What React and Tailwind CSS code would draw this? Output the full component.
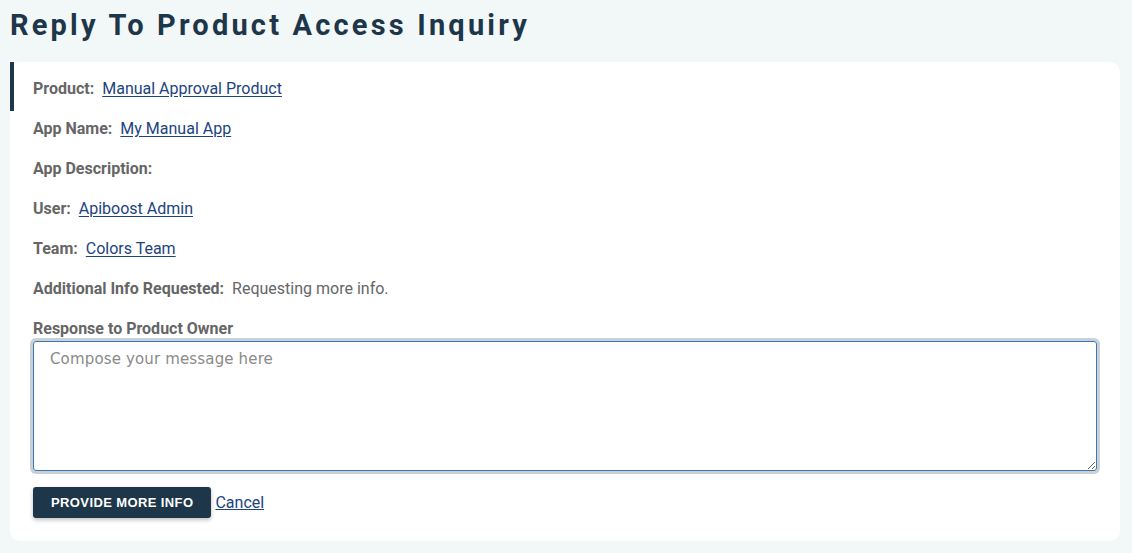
import React from "react";

const rows = [
  { label: "Product:", value: "Manual Approval Product", link: true },
  { label: "App Name:", value: "My Manual App", link: true },
  { label: "App Description:", value: "" },
  { label: "User:", value: "Apiboost Admin", link: true },
  { label: "Team:", value: "Colors Team", link: true },
  { label: "Additional Info Requested:", value: "Requesting more info." },
];

const App = () => {
  return (
    <div className="min-h-screen bg-[#f2f7f7] pl-[10px] pr-[12px] pt-[5px] pb-3 font-['Roboto',sans-serif]">
      <h1 className="text-[29px] font-bold tracking-[0.11em] text-[#1d3649] leading-[40px]">
        Reply To Product Access Inquiry
      </h1>

      {/* Card */}
      <div className="relative mt-[17px] bg-white rounded-[10px] pl-[23px] pr-[23px] pt-[7px] pb-[23px]">
        <div className="absolute left-0 top-0 h-[49px] w-[4px] bg-[#1d3649]" />

        {rows.map((r) => (
          <div key={r.label} className="flex items-center h-[40px] text-[16px] text-[#666666]">
            <span className="font-bold">{r.label}</span>
            {r.value && (
              <span
                className={`ml-[8px] ${
                  r.link ? "text-[#1a4480] underline underline-offset-2" : ""
                }`}
              >
                {r.value}
              </span>
            )}
          </div>
        ))}

        <label className="block mt-[10px] text-[16px] font-bold text-[#666666] leading-[20px]">
          Response to Product Owner
        </label>
        <textarea
          className="block mt-[2px] w-full h-[130px] border border-[#3a78b5] rounded-[3px] shadow-[0_0_0_3px_#c9d0d6] px-[16px] py-[6px] text-[15px] text-[#333] placeholder-[#8a8a8a] outline-none font-['DejaVu_Sans',sans-serif] tracking-[0.01em] resize-y"
          placeholder="Compose your message here"
        />

        <div className="flex items-center mt-[16px]">
          <button className="h-[31px] px-[18px] bg-[#1d3649] rounded-[3px] text-white text-[13px] font-bold tracking-[0.03em] uppercase shadow-[0_2px_4px_rgba(0,0,0,0.25)] font-['Liberation_Sans',sans-serif]">
            Provide More Info
          </button>
          <a
            href="#"
            className="ml-[4px] text-[16px] text-[#1a4480] underline"
          >
            Cancel
          </a>
        </div>
      </div>
    </div>
  );
};

export default App;
